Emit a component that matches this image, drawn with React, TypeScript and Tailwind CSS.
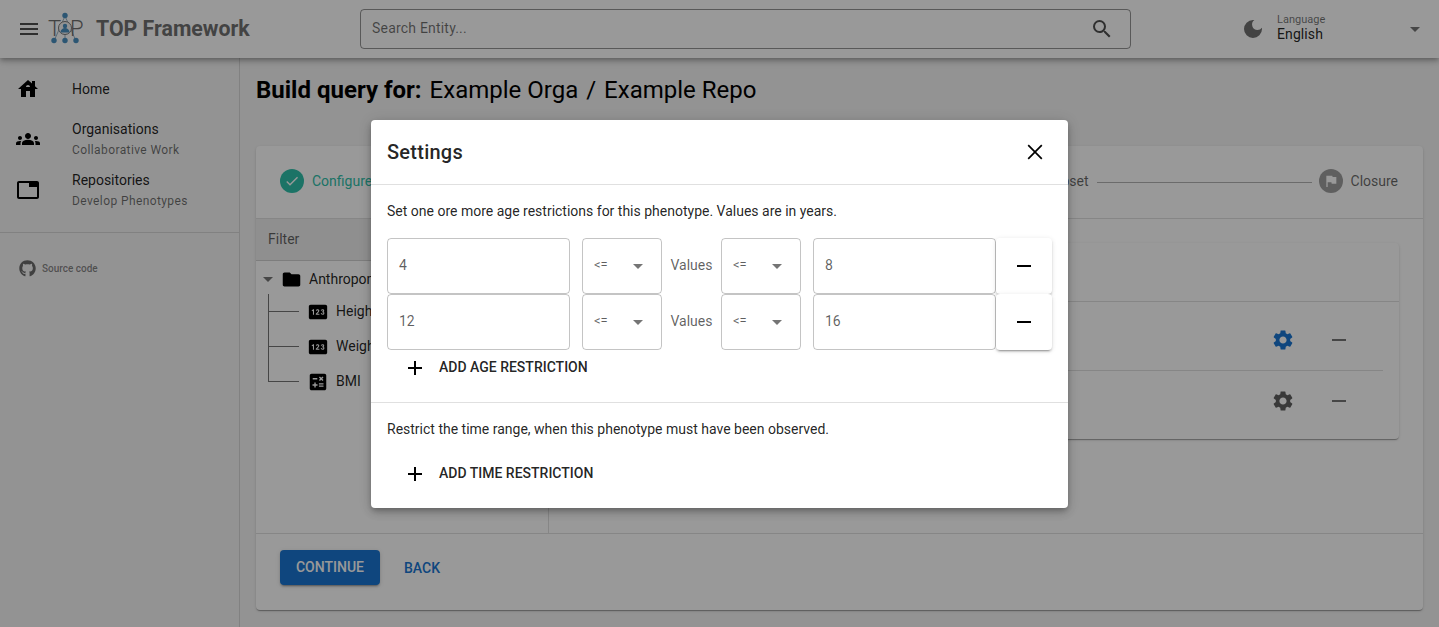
import React from "react";
import { FaGithub } from "react-icons/fa";
import {
  MdMenu, MdHouse, MdGroups, MdTab, MdSearch, MdDarkMode, MdArrowDropDown, MdCheck, MdFlag, MdFolder,
  MdPin, MdCalculate, MdSettings, MdRemove, MdAdd,
} from "react-icons/md";

function Logo() {
  return (
    <svg width="36" height="34" viewBox="0 0 36 34" className="shrink-0">
      <g stroke="#6f8fa6" strokeWidth="0.7" fill="none">
        <path d="M18 4 L7 29 M18 4 L29 29 M18 17 V29" />
      </g>
      <text x="1" y="24" fontFamily="Roboto, sans-serif" fontWeight="300" fontSize="22" fill="#6e6e6e">T</text>
      <text x="23" y="24" fontFamily="Roboto, sans-serif" fontWeight="300" fontSize="22" fill="#6e6e6e">P</text>
      <circle cx="18" cy="16" r="6.5" fill="#f5f5f5" stroke="#777" strokeWidth="1" />
      <circle cx="18" cy="14" r="2.2" fill="#4a8fc0" />
      <path d="M13.5 20.5 c0-6 9-6 9 0 z" fill="#4a8fc0" />
      <circle cx="18" cy="3.5" r="2.7" fill="#4a8fc0" />
      <circle cx="7" cy="28.5" r="2.7" fill="#4a8fc0" />
      <circle cx="18" cy="28.5" r="2.7" fill="#4a8fc0" />
      <circle cx="29" cy="28.5" r="2.7" fill="#4a8fc0" />
    </svg>
  );
}

function NavItem({ icon, title, sub, className }: { icon: React.ReactNode; title: string; sub?: string; className?: string }) {
  return (
    <div className={"flex items-center " + (className ?? "")}>
      <div className="w-[72px] pl-[16px] flex justify-start shrink-0">{icon}</div>
      <div>
        <div className="text-[14px] leading-[20px] text-[#000000de]">{title}</div>
        {sub && <div className="text-[12px] leading-[16px] mt-[3px] tracking-[0.4px] text-[#0000008f]">{sub}</div>}
      </div>
    </div>
  );
}

function TreeChild({ icon, label, last }: { icon: React.ReactNode; label: string; last?: boolean }) {
  return (
    <div className="flex h-[35px] items-center">
      <div className="w-[31px] h-full flex flex-col shrink-0">
        <div className="h-[18px] border-l border-b border-[#0000008a]" />
        {!last && <div className="flex-1 border-l border-[#0000008a]" />}
      </div>
      <div className="ml-[8px] w-[22px] flex justify-center shrink-0">{icon}</div>
      <span className="ml-[7px] text-[14px] text-[#000000de]">{label}</span>
    </div>
  );
}

function Field({ value }: { value: string }) {
  return (
    <div className="w-[183px] h-[56px] rounded-[4px] border border-[#0000003b] flex items-center pl-[11px] pb-[2px] text-[14px] text-[#000000a0] shrink-0">
      {value}
    </div>
  );
}

function Op() {
  return (
    <div className="w-[80px] h-[56px] rounded-[4px] border border-[#0000003b] flex items-center justify-between pl-[11px] pr-[11px] shrink-0">
      <span className="text-[13px] pb-[2px] text-[#000000a0]">&lt;=</span>
      <MdArrowDropDown size={24} className="text-[#0000008a]" />
    </div>
  );
}

function AgeRow({ a, b }: { a: string; b: string }) {
  return (
    <div className="flex items-center h-[56px]">
      <Field value={a} />
      <div className="ml-[12px]"><Op /></div>
      <span className="w-[59px] pb-[2px] text-center text-[14px] text-[#000000a0] shrink-0">Values</span>
      <Op />
      <div className="ml-[12px]"><Field value={b} /></div>
      <div className="w-[56px] h-[56px] bg-white rounded-[4px] flex items-center justify-center shadow-[0_3px_1px_-2px_rgba(0,0,0,.2),0_2px_2px_0_rgba(0,0,0,.14),0_1px_5px_0_rgba(0,0,0,.12)] shrink-0">
        <MdRemove size={24} className="text-black" />
      </div>
    </div>
  );
}

function AddButton({ label }: { label: string }) {
  return (
    <div className="flex items-center pl-[16px]">
      <MdAdd size={24} className="text-black" />
      <span className="ml-[12px] pb-[2px] text-[14px] font-medium text-[#000000de]">{label}</span>
    </div>
  );
}

export default function App() {
  return (
    <div className="relative h-[627px] w-[1439px] overflow-hidden bg-[#f5f5f5] [font-family:Roboto,sans-serif]">
      <header className="relative z-10 h-[58px] bg-white flex items-center shadow-[0_2px_4px_-1px_rgba(0,0,0,.2),0_4px_5px_0_rgba(0,0,0,.14),0_1px_10px_0_rgba(0,0,0,.12)]">
        <div className="w-[360px] flex items-center shrink-0">
          <MdMenu size={24} className="ml-[17px] text-[#000000b0]" />
          <div className="ml-[6px]"><Logo /></div>
          <span className="ml-[13px] text-[21.3px] font-bold text-[#707070]">TOP Framework</span>
        </div>
        <div className="w-[771px] h-[40px] rounded-[4px] border border-[#0000006b] flex items-center justify-between pl-[11px] pr-[16px] shrink-0">
          <span className="text-[14px] pb-[1px] tracking-[0.2px] text-[#0000008f]">Search Entity...</span>
          <MdSearch size={24} className="text-[#000000b0]" />
        </div>
        <div className="w-[110px] shrink-0" />
        <MdDarkMode size={24} className="text-[#707070]" />
        <div className="ml-[12px] w-[126px] pb-[2px]">
          <div className="text-[11px] leading-[12px] text-[#0000008f]">Language</div>
          <div className="text-[14px] leading-[16px] tracking-[0.1px] text-[#000000de]">English</div>
        </div>
        <MdArrowDropDown size={24} className="text-[#0000008a]" />
      </header>

      <div className="flex h-[569px]">
        <aside className="w-[240px] border-r border-[#0000001f] shrink-0">
          <NavItem className="mt-[19px]" icon={<MdHouse size={24} className="text-black" />} title="Home" />
          <NavItem className="mt-[18px]" icon={<MdGroups size={24} className="text-black" />} title="Organisations" sub="Collaborative Work" />
          <NavItem className="mt-[12px]" icon={<MdTab size={24} className="text-black" />} title="Repositories" sub="Develop Phenotypes" />
          <div className="mt-[23px] border-t border-[#0000001f]" />
          <div className="mt-[27px] pl-[19px] flex items-center">
            <FaGithub size={17} className="text-[#0000008f]" />
            <span className="ml-[6px] text-[10px] font-medium text-[#0000007a]">Source code</span>
          </div>
        </aside>

        <main className="flex-1 pl-[16px] pr-[16px]">
          <div className="mt-[16px] h-[32px] flex items-center text-[24px] text-black">
            <span className="font-bold">Build query for:</span>
            <span className="ml-[8px]">Example Orga</span>
            <span className="mx-[8px]">/</span>
            <span>Example Repo</span>
          </div>
          <section className="mt-[40px] h-[464px] bg-white rounded-[4px] flex flex-col shadow-[0_2px_1px_-1px_rgba(0,0,0,.2),0_1px_1px_0_rgba(0,0,0,.14),0_1px_3px_0_rgba(0,0,0,.12)]">
            <div className="h-[73px] flex items-center pl-[24px] pr-[24px] pb-[2px] border-b border-[#0000001f] shrink-0">
              <div className="w-[24px] h-[24px] rounded-full bg-[#30c0aa] flex items-center justify-center">
                <MdCheck size={16} className="text-white" />
              </div>
              <span className="ml-[8px] text-[14px] text-[#30c0aa]">Configure</span>
              <div className="flex-1" />
              <span className="text-[14px] text-[#00000099]">Subset</span>
              <div className="ml-[8px] w-[215px] border-t border-[#0000004d] mt-[2px]" />
              <div className="ml-[7px] w-[24px] h-[24px] rounded-full bg-[#00000061] flex items-center justify-center">
                <MdFlag size={16} className="text-white" />
              </div>
              <span className="ml-[8px] mr-[1px] text-[14px] text-[#00000099]">Closure</span>
            </div>
            <div className="flex h-[315px] border-b border-[#0000001f] shrink-0">
              <div className="w-[293px] border-r border-[#0000001f] shrink-0">
                <div className="h-[42px] bg-[#eeeeee] flex items-center pl-[12px] text-[14px] text-[#00000099] border-b border-[#0000001f]">Filter</div>
                <div className="pl-[12px] pt-[1px]">
                  <div className="flex items-center h-[32px] -ml-[12px] pt-[2px]">
                    <MdArrowDropDown size={24} className="text-[#0000008a] shrink-0" />
                    <MdFolder size={21} className="ml-[1px] text-black shrink-0" />
                    <span className="ml-[7px] text-[14px] text-[#000000de] whitespace-nowrap">Anthropometry</span>
                  </div>
                  <TreeChild icon={<MdPin size={22} className="text-black" />} label="Height" />
                  <TreeChild icon={<MdPin size={22} className="text-black" />} label="Weight" />
                  <TreeChild icon={<MdCalculate size={22} className="text-black" />} label="BMI" last />
                </div>
              </div>
              <div className="flex-1 pl-[24px] pr-[24px] pt-[24px]">
                <div className="h-[196px] bg-white rounded-[4px] flex flex-col shadow-[0_2px_1px_-1px_rgba(0,0,0,.2),0_1px_1px_0_rgba(0,0,0,.14),0_1px_3px_0_rgba(0,0,0,.12)]">
                  <div className="h-[59px] border-b border-[#0000001f] shrink-0" />
                  <div className="flex-1 pr-[16px] flex flex-col">
                    <div className="h-[69px] flex items-start pt-[26px] justify-end pr-[32px] border-b border-[#0000001f] shrink-0">
                      <MdSettings size={24} className="text-[#1976d2]" />
                      <MdRemove size={24} className="ml-[32px] text-[#0000008a]" />
                    </div>
                    <div className="flex-1 flex items-start pt-[18px] justify-end pr-[32px]">
                      <MdSettings size={24} className="text-[#000000a0]" />
                      <MdRemove size={24} className="ml-[32px] text-[#0000008a]" />
                    </div>
                  </div>
                </div>
              </div>
            </div>
            <div className="flex-1 pl-[24px] pt-[16px] flex items-start">
              <div className="w-[100px] h-[35px] rounded-[4px] bg-[#1976d2] text-white text-[14px] font-medium flex items-center justify-center shadow-[0_3px_1px_-2px_rgba(0,0,0,.2),0_2px_2px_0_rgba(0,0,0,.14),0_1px_5px_0_rgba(0,0,0,.12)]">CONTINUE</div>
              <span className="ml-[24px] mt-[8px] text-[14px] font-medium text-[#1976d2]">BACK</span>
            </div>
          </section>
        </main>
      </div>

      {/* modal backdrop */}
      <div className="absolute inset-0 z-20 bg-black/40" />
      <div className="absolute z-30 left-[371px] top-[120px] w-[697px] h-[388px] bg-white rounded-[4px] shadow-[0_3px_5px_-1px_rgba(0,0,0,.2),0_5px_8px_0_rgba(0,0,0,.14),0_1px_14px_0_rgba(0,0,0,.12)] flex flex-col">
        <div className="h-[65px] border-b border-[#0000001f] flex items-center justify-between pl-[16px] pr-[21px] shrink-0">
          <span className="text-[20px] font-medium text-[#000000de] tracking-[0.25px]">Settings</span>
          <svg width="24" height="24" viewBox="0 0 24 24" className="text-black" fill="none" stroke="currentColor" strokeWidth="1.7">
            <path d="M5.2 5.2 L18.8 18.8 M18.8 5.2 L5.2 18.8" />
          </svg>
        </div>
        <div className="pl-[16px] pr-[16px] h-[218px] border-b border-[#0000001f] shrink-0">
          <p className="mt-[16px] leading-[20px] text-[14px] text-[#000000de]">Set one ore more age restrictions for this phenotype. Values are in years.</p>
          <div className="mt-[17px]">
            <AgeRow a="4" b="8" />
            <AgeRow a="12" b="16" />
          </div>
          <div className="mt-[6px]"><AddButton label="ADD AGE RESTRICTION" /></div>
        </div>
        <div className="pl-[16px] pr-[16px]">
          <p className="mt-[16px] leading-[20px] text-[14px] text-[#000000de]">Restrict the time range, when this phenotype must have been observed.</p>
          <div className="mt-[23px]"><AddButton label="ADD TIME RESTRICTION" /></div>
        </div>
      </div>
    </div>
  );
}
